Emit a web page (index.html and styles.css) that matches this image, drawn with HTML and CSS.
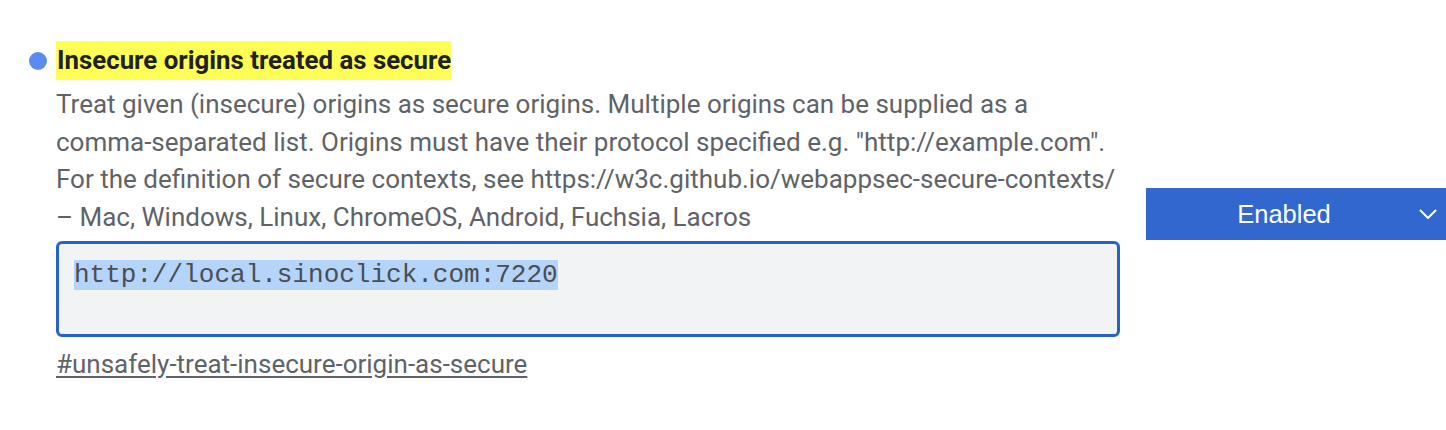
FILE: index.html
```html
<!DOCTYPE html>
<html>
<head>
<meta charset="utf-8">
<link rel="stylesheet" href="styles.css">
</head>
<body>
<div class="experiment">
  <div class="main">
    <div class="title-row">
      <span class="dot"></span>
      <h2 class="title">Insecure origins treated as secure</h2>
    </div>
    <div class="body">
      <p class="desc">Treat given (insecure) origins as secure origins. Multiple origins can be supplied as a comma-separated list. Origins must have their protocol specified e.g. "http://example.com". For the definition of secure contexts, see https://w3c.github.io/webappsec-secure-contexts/ – Mac, Windows, Linux, ChromeOS, Android, Fuchsia, Lacros</p>
      <div class="origins"><span class="sel">http://local.sinoclick.com:7220</span></div>
      <a class="permalink" href="#unsafely-treat-insecure-origin-as-secure">#unsafely-treat-insecure-origin-as-secure</a>
    </div>
  </div>
  <div class="control">
    <div class="select">
      <span class="select-label">Enabled</span>
      <svg class="chevron" width="18" height="10" viewBox="0 0 18 10"><path d="M1 1 L9 9 L17 1" fill="none" stroke="#fff" stroke-width="2"/></svg>
    </div>
  </div>
</div>
</body>
</html>
```

FILE: styles.css
```css
html, body {
  margin: 0;
  padding: 0;
  background: #ffffff;
  overflow: hidden;
}
body {
  font-family: Roboto, "Noto Sans", sans-serif;
  width: 1446px;
  height: 430px;
}
.experiment {
  display: flex;
  align-items: center;
  padding: 41px 0 0 29px;
}
.main {
  width: 1091px;
  flex: none;
}
.title-row {
  display: flex;
  align-items: center;
  gap: 9px;
}
.dot {
  width: 18px;
  height: 18px;
  border-radius: 50%;
  background: #5a8bf0;
  flex: none;
}
.title {
  margin: 0;
  font-size: 25.8px;
  font-weight: 700;
  line-height: 39px;
  color: #202124;
  background: #fefe55;
  padding: 0 0 0 1px;
}
.body {
  padding-left: 27px;
}
.desc {
  margin: 6px 0 0;
  font-size: 26px;
  line-height: 37.7px;
  color: #5f6368;
}
.origins {
  margin-top: 4px;
  box-sizing: border-box;
  height: 96px;
  border: 3px solid #2662c8;
  border-radius: 6px;
  background: #f1f3f4;
  padding: 16px 15px;
  font-family: "Liberation Mono", "DejaVu Sans Mono", monospace;
  font-size: 26px;
  line-height: 30px;
  color: #4a4d51;
}
.sel {
  background: #b4d4fa;
}
.permalink {
  display: inline-block;
  margin-top: 9px;
  font-size: 26px;
  line-height: 37.7px;
  color: #5f6368;
  text-decoration: underline;
  text-underline-offset: 3px;
}
.control {
  margin-left: 26px;
  margin-top: 4px;
  flex: none;
}
.select {
  width: 300px;
  height: 52px;
  box-sizing: border-box;
  background: #3367d0;
  color: #ffffff;
  display: flex;
  align-items: center;
  padding: 1px 40px 0 16px;
  position: relative;
  font-family: "Liberation Sans", Arial, sans-serif;
  font-size: 25.5px;
}
.select-label {
  flex: 1;
  text-align: center;
}
.chevron {
  position: absolute;
  right: 9px;
  top: 21px;
}
```
